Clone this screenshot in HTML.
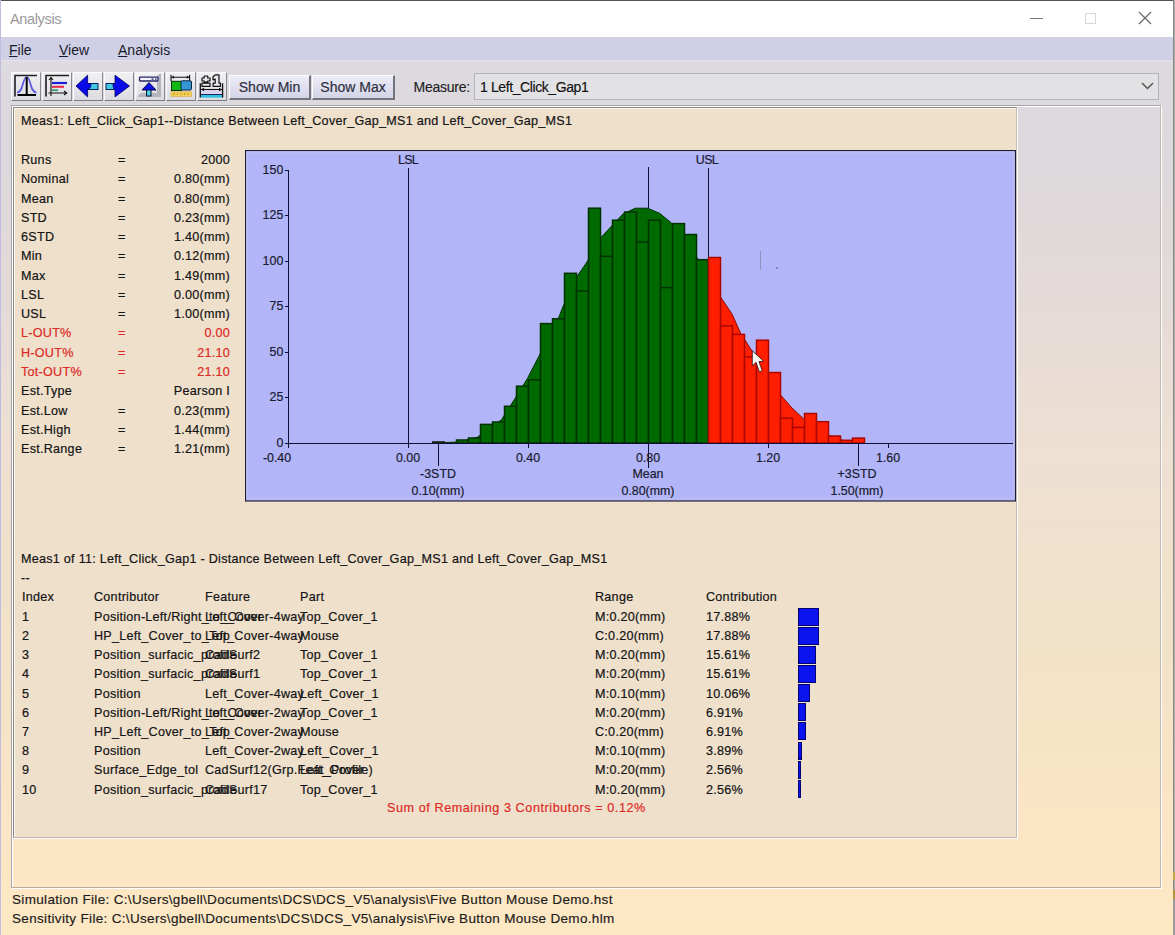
<!DOCTYPE html>
<html><head><meta charset="utf-8"><style>
*{margin:0;padding:0;box-sizing:border-box}
html,body{width:1175px;height:935px;overflow:hidden}
body{position:relative;font-family:"Liberation Sans", sans-serif;background:linear-gradient(to bottom,#dfdce2 0px,#dddae0 61px,#dcd8dc 150px,#e4dad8 300px,#eee0d2 455px,#f2e2c8 650px,#fde6c4 865px,#fde8c4 935px)}
.abs{position:absolute}
.t{position:absolute;font-size:12.6px;letter-spacing:0.26px;-webkit-text-stroke:0.2px currentColor;line-height:16px;color:#141414;white-space:pre}
.t.r{text-align:right}
.red{color:#dc2a26}
.tb{position:absolute;top:72px;width:30px;height:29px;background:linear-gradient(#f0eff2,#dcdbe0);border-top:1px solid #fbfbfd;border-left:1px solid #fbfbfd;border-right:1.5px solid #8a8a90;border-bottom:1.5px solid #7a7a80}
.btn{position:absolute;top:75px;height:25px;background:linear-gradient(#ededf8,#d6d6e8);border-top:1px solid #fdfdff;border-left:1px solid #fdfdff;border-right:2px solid #74747e;border-bottom:2px solid #74747e;font-size:14px;color:#303040;-webkit-text-stroke:0.2px #303040;text-align:center;line-height:23px;background:linear-gradient(#ececf8,#d4d4e8)}
.bar{position:absolute;background:#0a14ee;border:1px solid #000070}
</style></head><body>
<!-- window frame -->
<div class="abs" style="left:0;top:0;width:1175px;height:1px;background:#555"></div>
<div class="abs" style="left:0;top:1px;width:1173px;height:36px;background:#fff"></div>
<div class="abs" style="left:0;top:0;width:1px;height:935px;background:#c0bce0"></div>
<div class="abs" style="left:1173px;top:0;width:1px;height:935px;background:#8a8a84"></div><div class="abs" style="left:1174px;top:0;width:1px;height:935px;background:#a8aca8"></div>
<div class="abs" style="left:10px;top:11px;font-size:14.6px;letter-spacing:-0.4px;color:#9a9a9a">Analysis</div>
<!-- caption buttons -->
<div class="abs" style="left:1030px;top:18px;width:13px;height:1px;background:#777"></div>
<div class="abs" style="left:1085px;top:13px;width:11px;height:11px;border:1px solid #d8d8d8"></div>
<svg class="abs" style="left:1138px;top:11px" width="14" height="14"><path d="M1,1 L13,13 M13,1 L1,13" stroke="#666" stroke-width="1.2"/></svg>
<div class="abs" style="left:1173px;top:872px;width:2px;height:8px;background:#c0a840"></div><div class="abs" style="left:1173px;top:890px;width:2px;height:9px;background:#b09838"></div><div class="abs" style="left:1173px;top:899px;width:2px;height:36px;background:#9a9aa0"></div>
<!-- menu -->
<div class="abs" style="left:1px;top:37px;width:1172px;height:23px;background:#cfd0e6"></div>
<div class="abs" style="left:1px;top:60px;width:1172px;height:1px;background:#e6e0ee"></div>
<div class="abs" style="left:9px;top:41.5px;font-size:14px;color:#1a1a2a"><u>F</u>ile</div>
<div class="abs" style="left:59px;top:41.5px;font-size:14px;color:#1a1a2a"><u>V</u>iew</div>
<div class="abs" style="left:118px;top:41.5px;font-size:14px;color:#1a1a2a"><u>A</u>nalysis</div>
<!-- toolbar placeholder -->

<div class="tb" style="left:11px"></div>
<div class="tb" style="left:42px"></div>
<div class="tb" style="left:73px"></div>
<div class="tb" style="left:104px"></div>
<div class="tb" style="left:135px"></div>
<div class="tb" style="left:166px"></div>
<div class="tb" style="left:197px"></div>
<svg class="abs" style="left:0;top:60px" width="240" height="50" viewBox="0 60 240 50">
<!-- icon1 pressed frame -->
<path d="M15,96.5 V75.5 H37" stroke="#202020" stroke-width="1.6" fill="none"/>
<path d="M17,92.5 C20.5,92.5 21.8,88.5 23.2,83 C24.5,78.5 25.5,77 26.7,77 C27.9,77 28.9,78.5 30.2,83 C31.6,88.5 32.9,92.5 36.5,92.5" stroke="#5a5ae0" stroke-width="1.7" fill="none"/>
<path d="M26.7,77 V95 M17.5,95 H36" stroke="#000" stroke-width="2" fill="none"/>
<!-- icon2 -->
<path d="M46,96.5 V75.5 H69" stroke="#202020" stroke-width="1.6" fill="none"/>
<path d="M51,96 V78 M49,80 L51,77.5 L53,80 M48.5,93 H66.5 M64,91 L66.8,93 L64,95" stroke="#111" stroke-width="1.1" fill="none"/>
<path d="M52,83 H67" stroke="#1a20d8" stroke-width="2.2"/>
<path d="M52,86.8 H64" stroke="#e82848" stroke-width="2"/>
<path d="M52,90.2 H58" stroke="#30a070" stroke-width="1.8"/>
<!-- icon3 left arrow -->
<rect x="86" y="83.5" width="12" height="6" fill="#40c8e0" stroke="#06205a" stroke-width="1"/>
<path d="M76,86 L87.6,75.2 V83.5 H91 C91,88 89,89.5 87.6,89.5 V96.9 Z" fill="#0a0ae8" stroke="#000060" stroke-width="0.8"/>
<!-- icon4 right arrow -->
<rect x="106" y="83.5" width="12" height="6" fill="#40c8e0" stroke="#06205a" stroke-width="1"/>
<path d="M129.5,86 L115,75.2 V83.5 H113 C113,88 114,89.5 115,89.5 V96.9 Z" fill="#0a0ae8" stroke="#000060" stroke-width="0.8"/>
<!-- icon5 -->
<path d="M137,97 L141,93 H157 V76 L161,72.5 V97 Z" fill="#b4b4bc"/>
<path d="M137,97 V73 H161" stroke="#f8f8fa" stroke-width="1" fill="none"/>
<rect x="139.5" y="77.2" width="18.5" height="3.8" rx="0.8" fill="#f2f2fa" stroke="#262668" stroke-width="1.3"/>
<path d="M151.5,79.1 H153.5 M155,79.1 H156.5" stroke="#262668" stroke-width="1.3"/>
<rect x="146.5" y="89" width="4.5" height="7" fill="#50d0e8" stroke="#041030" stroke-width="1"/>
<path d="M149,82.5 L156,90 H142 Z" fill="#0a10e8" stroke="#000040" stroke-width="0.9"/>
<!-- icon6 -->
<path d="M171,77.2 H189.8 M171,74.8 V81 M189.6,74.8 V81" stroke="#111" stroke-width="1.1" fill="none"/>
<path d="M171.5,77.2 L174,75.6 V78.8 Z M189.3,77.2 L186.8,75.6 V78.8 Z" fill="#111"/>
<rect x="171.5" y="81.3" width="10" height="9.2" fill="#12b812" stroke="#0a300a" stroke-width="1"/>
<rect x="181" y="80.8" width="10.5" height="9.2" rx="1.2" fill="#3498d4" stroke="#0a2440" stroke-width="1"/>
<rect x="171" y="91.8" width="20.5" height="4.5" fill="#f4d050" stroke="#d8a838" stroke-width="0.6"/>
<path d="M174,93 V95 M177.5,93 V95 M181,93 V95 M184.5,93 V95 M188,93 V95" stroke="#9a8030" stroke-width="0.7"/>
<!-- icon7 -->
<rect x="200.5" y="90.5" width="22" height="3.8" fill="#dcd4f6"/>
<path d="M200.5,94.6 H222.5" stroke="#0a1850" stroke-width="1"/>
<rect x="200.5" y="95" width="22" height="2.6" fill="#30c0e0"/>
<path d="M200.3,83.2 V97.5 M222.6,83.2 V97.5" stroke="#111" stroke-width="1.3" fill="none"/>
<path d="M201,89.5 H222" stroke="#111" stroke-width="1.1"/>
<path d="M201,89.5 L204,87.8 V91.2 Z M222,89.5 L219,87.8 V91.2 Z" fill="#111"/>
<path d="M204.2,76 H207.7 V78 H210 V81 H207.7 V82 H204.2 V81 H202 V78 H204.2 Z M202,83.2 H210 V86.4 H202 Z M215.2,74.8 H219 V83.2 H220.5 V86.4 H213.1 V83.2 H215.2 V79.2 L213,79.8 V77 Z" fill="#e8e8ec" stroke="#111" stroke-width="1.2" stroke-linejoin="round"/>
</svg>
<div class="btn" style="left:229px;width:82px">Show Min</div>
<div class="btn" style="left:312px;width:83px">Show Max</div>

<!-- combobox -->
<div class="abs" style="left:413.5px;top:79px;font-size:14px;letter-spacing:-0.25px;color:#222;-webkit-text-stroke:0.15px #222">Measure:</div>
<div class="abs" style="left:474px;top:73px;width:685px;height:27px;border:1px solid #b4b4b4;background:#e2e2e4"></div>
<div class="abs" style="left:480px;top:79px;font-size:14px;letter-spacing:-0.4px;color:#111;-webkit-text-stroke:0.15px #111">1 Left_Click_Gap1</div>
<svg class="abs" style="left:1141px;top:82px" width="13" height="8"><path d="M1,1 L6.5,6.5 L12,1" stroke="#555" stroke-width="1.5" fill="none"/></svg>
<!-- outer frame -->
<div class="abs" style="left:11px;top:105px;width:1150px;height:783px;border-top:1px solid #a8a6aa;border-left:1px solid #a8a6aa;border-right:1px solid #c0b8b0;border-bottom:1px solid #b8aaa0;box-shadow:inset 1px 1px 0 #fff, 1px 1px 0 #fff"></div>
<!-- inner panel -->
<div class="abs" style="left:13px;top:107px;width:1004px;height:731px;background:#efe0cc;border-top:1px solid #8c8a88;border-left:1px solid #8c8a88;border-right:1px solid #c4b8b0;border-bottom:1px solid #c0b0a8;box-shadow:inset 1px 1px 0 #fbf6ee, 1px 1px 0 #fff"></div>
<div class="t" style="left:21px;top:113px">Meas1: Left_Click_Gap1--Distance Between Left_Cover_Gap_MS1 and Left_Cover_Gap_MS1</div>
<div class="t" style="left:21px;top:152.0px">Runs</div>
<div class="t" style="left:118px;top:152.0px">=</div>
<div class="t r" style="right:945px;top:152.0px">2000</div>
<div class="t" style="left:21px;top:171.3px">Nominal</div>
<div class="t" style="left:118px;top:171.3px">=</div>
<div class="t r" style="right:945px;top:171.3px">0.80(mm)</div>
<div class="t" style="left:21px;top:190.5px">Mean</div>
<div class="t" style="left:118px;top:190.5px">=</div>
<div class="t r" style="right:945px;top:190.5px">0.80(mm)</div>
<div class="t" style="left:21px;top:209.8px">STD</div>
<div class="t" style="left:118px;top:209.8px">=</div>
<div class="t r" style="right:945px;top:209.8px">0.23(mm)</div>
<div class="t" style="left:21px;top:229.1px">6STD</div>
<div class="t" style="left:118px;top:229.1px">=</div>
<div class="t r" style="right:945px;top:229.1px">1.40(mm)</div>
<div class="t" style="left:21px;top:248.3px">Min</div>
<div class="t" style="left:118px;top:248.3px">=</div>
<div class="t r" style="right:945px;top:248.3px">0.12(mm)</div>
<div class="t" style="left:21px;top:267.6px">Max</div>
<div class="t" style="left:118px;top:267.6px">=</div>
<div class="t r" style="right:945px;top:267.6px">1.49(mm)</div>
<div class="t" style="left:21px;top:286.9px">LSL</div>
<div class="t" style="left:118px;top:286.9px">=</div>
<div class="t r" style="right:945px;top:286.9px">0.00(mm)</div>
<div class="t" style="left:21px;top:306.2px">USL</div>
<div class="t" style="left:118px;top:306.2px">=</div>
<div class="t r" style="right:945px;top:306.2px">1.00(mm)</div>
<div class="t red" style="left:21px;top:325.4px">L-OUT%</div>
<div class="t red" style="left:118px;top:325.4px">=</div>
<div class="t red r" style="right:945px;top:325.4px">0.00</div>
<div class="t red" style="left:21px;top:344.7px">H-OUT%</div>
<div class="t red" style="left:118px;top:344.7px">=</div>
<div class="t red r" style="right:945px;top:344.7px">21.10</div>
<div class="t red" style="left:21px;top:364.0px">Tot-OUT%</div>
<div class="t red" style="left:118px;top:364.0px">=</div>
<div class="t red r" style="right:945px;top:364.0px">21.10</div>
<div class="t" style="left:21px;top:383.2px">Est.Type</div>
<div class="t r" style="right:945px;top:383.2px">Pearson I</div>
<div class="t" style="left:21px;top:402.5px">Est.Low</div>
<div class="t" style="left:118px;top:402.5px">=</div>
<div class="t r" style="right:945px;top:402.5px">0.23(mm)</div>
<div class="t" style="left:21px;top:421.8px">Est.High</div>
<div class="t" style="left:118px;top:421.8px">=</div>
<div class="t r" style="right:945px;top:421.8px">1.44(mm)</div>
<div class="t" style="left:21px;top:441.1px">Est.Range</div>
<div class="t" style="left:118px;top:441.1px">=</div>
<div class="t r" style="right:945px;top:441.1px">1.21(mm)</div>
<!-- chart -->
<svg class="abs" style="left:245px;top:150px" width="771" height="352" viewBox="245 150 771 352" font-family='"Liberation Sans", sans-serif' font-size="12.4">
<rect x="245" y="149" width="772" height="354" fill="#fff4f0"/>
<rect x="245.5" y="150.5" width="770" height="350.5" fill="#b2b6f8" stroke="#1e1a30" stroke-width="1.2"/>
<path d="M247,500 V152 H1014 M247,499 H1014 V152" stroke="#c4c0f0" stroke-width="1" fill="none"/>
<g transform="translate(-1,0)">
<path d="M409.5,168 V443 M709.5,168 V443 M649.5,167 V443" stroke="#101038" stroke-width="1"/>
<polygon points="433.0,443.0 433.0,443.0 460.0,442.0 478.5,437.2 502.6,419.6 515.4,399.5 528.3,378.7 539.5,357.0 559.6,317.7 564.4,305.6 577.0,278.0 588.0,262.0 601.0,238.6 612.4,226.3 624.0,214.0 636.3,208.2 648.5,208.2 660.8,213.4 672.3,222.9 697.5,257.0 709.0,275.0 709.0,275.0 709.0,443.0" fill="#006a00" stroke="#003000" stroke-width="1"/>
<polygon points="709.0,443.0 709.0,275.0 720.9,296.0 733.0,314.0 741.7,333.4 751.0,348.0 781.0,394.3 793.0,408.0 804.7,418.9 817.0,427.4 829.0,435.0 841.0,439.8 852.8,442.0 865.0,443.0 865.0,443.0" fill="#ff1e00" stroke="#900800" stroke-width="1"/>
<path d="M433,442 H446" stroke="#102010" stroke-width="1.6"/>
<rect x="457.5" y="440.0" width="12" height="3.0" fill="#006a00" stroke="#003200" stroke-width="1.5"/>
<rect x="469.5" y="438.0" width="12" height="5.0" fill="#006a00" stroke="#003200" stroke-width="1.5"/>
<rect x="481.5" y="424.4" width="12" height="18.6" fill="#006a00" stroke="#003200" stroke-width="1.5"/>
<rect x="493.5" y="422.0" width="12" height="21.0" fill="#006a00" stroke="#003200" stroke-width="1.5"/>
<rect x="505.5" y="406.3" width="12" height="36.7" fill="#006a00" stroke="#003200" stroke-width="1.5"/>
<rect x="517.5" y="386.2" width="12" height="56.8" fill="#006a00" stroke="#003200" stroke-width="1.5"/>
<rect x="529.5" y="379.8" width="12" height="63.2" fill="#006a00" stroke="#003200" stroke-width="1.5"/>
<rect x="541.5" y="323.6" width="12" height="119.4" fill="#006a00" stroke="#003200" stroke-width="1.5"/>
<rect x="553.5" y="318.8" width="12" height="124.2" fill="#006a00" stroke="#003200" stroke-width="1.5"/>
<rect x="565.5" y="273.3" width="12" height="169.7" fill="#006a00" stroke="#003200" stroke-width="1.5"/>
<rect x="577.5" y="291.0" width="12" height="152.0" fill="#006a00" stroke="#003200" stroke-width="1.5"/>
<rect x="589.5" y="208.2" width="12" height="234.8" fill="#006a00" stroke="#003200" stroke-width="1.5"/>
<rect x="601.5" y="256.3" width="12" height="186.7" fill="#006a00" stroke="#003200" stroke-width="1.5"/>
<rect x="613.5" y="220.2" width="12" height="222.8" fill="#006a00" stroke="#003200" stroke-width="1.5"/>
<rect x="625.5" y="212.0" width="12" height="231.0" fill="#006a00" stroke="#003200" stroke-width="1.5"/>
<rect x="637.5" y="242.0" width="12" height="201.0" fill="#006a00" stroke="#003200" stroke-width="1.5"/>
<rect x="649.5" y="220.2" width="12" height="222.8" fill="#006a00" stroke="#003200" stroke-width="1.5"/>
<rect x="661.5" y="287.6" width="12" height="155.4" fill="#006a00" stroke="#003200" stroke-width="1.5"/>
<rect x="673.5" y="223.6" width="12" height="219.4" fill="#006a00" stroke="#003200" stroke-width="1.5"/>
<rect x="685.5" y="234.5" width="12" height="208.5" fill="#006a00" stroke="#003200" stroke-width="1.5"/>
<rect x="697.5" y="259.7" width="12" height="183.3" fill="#006a00" stroke="#003200" stroke-width="1.5"/>
<rect x="709.5" y="257.5" width="12" height="185.5" fill="#ff1e00" stroke="#a80800" stroke-width="1.5"/>
<rect x="721.5" y="325.9" width="12" height="117.1" fill="#ff1e00" stroke="#a80800" stroke-width="1.5"/>
<rect x="733.5" y="334.4" width="12" height="108.6" fill="#ff1e00" stroke="#a80800" stroke-width="1.5"/>
<rect x="745.5" y="356.9" width="12" height="86.1" fill="#ff1e00" stroke="#a80800" stroke-width="1.5"/>
<rect x="757.5" y="340.2" width="12" height="102.8" fill="#ff1e00" stroke="#a80800" stroke-width="1.5"/>
<rect x="769.5" y="372.5" width="12" height="70.5" fill="#ff1e00" stroke="#a80800" stroke-width="1.5"/>
<rect x="781.5" y="418.2" width="12" height="24.8" fill="#ff1e00" stroke="#a80800" stroke-width="1.5"/>
<rect x="793.5" y="427.4" width="12" height="15.6" fill="#ff1e00" stroke="#a80800" stroke-width="1.5"/>
<rect x="805.5" y="413.5" width="12" height="29.5" fill="#ff1e00" stroke="#a80800" stroke-width="1.5"/>
<rect x="817.5" y="421.7" width="12" height="21.3" fill="#ff1e00" stroke="#a80800" stroke-width="1.5"/>
<rect x="829.5" y="436.0" width="12" height="7.0" fill="#ff1e00" stroke="#a80800" stroke-width="1.5"/>
<rect x="841.5" y="440.3" width="12" height="2.7" fill="#ff1e00" stroke="#a80800" stroke-width="1.5"/>
<rect x="853.5" y="438.1" width="12" height="4.9" fill="#ff1e00" stroke="#a80800" stroke-width="1.5"/>
<g stroke="#101038" stroke-width="1" fill="none">
<path d="M289.5,170 V443.5 H1014"/>
<path d="M286,170.5 H289 M286,215.5 H289 M286,261.5 H289 M286,306.5 H289 M286,352.5 H289 M286,397.5 H289 M286,443.5 H289"/>
<path d="M289.5,443 V448 M409.5,443 V448 M529.5,443 V448 M769.5,443 V448 M889.5,443 V448"/>
<path d="M439.5,443 V466 M859.5,443 V466 M649.5,443 V468"/>
</g>
<g fill="#1a1a30" stroke="#1a1a30" stroke-width="0.2">
<text x="284.3" y="174" text-anchor="end">150</text>
<text x="284.3" y="219.3" text-anchor="end">125</text>
<text x="284.3" y="265" text-anchor="end">100</text>
<text x="284.3" y="310.3" text-anchor="end">75</text>
<text x="284.3" y="356" text-anchor="end">50</text>
<text x="284.3" y="401.3" text-anchor="end">25</text>
<text x="284.3" y="447.3" text-anchor="end">0</text>
<text x="409" y="164" text-anchor="middle" letter-spacing="-0.6">LSL</text>
<text x="708" y="164" text-anchor="middle" letter-spacing="-0.6">USL</text>
<text x="278" y="462" text-anchor="middle">-0.40</text>
<text x="409" y="462" text-anchor="middle">0.00</text>
<text x="529" y="462" text-anchor="middle">0.40</text>
<text x="649" y="462" text-anchor="middle">0.80</text>
<text x="769" y="462" text-anchor="middle">1.20</text>
<text x="889" y="462" text-anchor="middle">1.60</text>
<text x="439" y="478" text-anchor="middle">-3STD</text>
<text x="439" y="495" text-anchor="middle">0.10(mm)</text>
<text x="649" y="478" text-anchor="middle">Mean</text>
<text x="649" y="495" text-anchor="middle">0.80(mm)</text>
<text x="858" y="478" text-anchor="middle">+3STD</text>
<text x="858" y="495" text-anchor="middle">1.50(mm)</text>
</g>
<path d="M753.3,350.7 V366 L757,362.3 L760.3,371.8 L763.2,370.8 L760,361.6 L764.6,361.3 Z" fill="#f4f4f0" stroke="#301010" stroke-width="0.8"/>
<path d="M761.5,251 V270" stroke="#8888b0" stroke-width="0.8"/><rect x="777.5" y="267.5" width="1.2" height="1.2" fill="#303050"/>
</g>
</svg>
<div class="t " style="left:21px;top:550.8px">Meas1 of 11: Left_Click_Gap1 - Distance Between Left_Cover_Gap_MS1 and Left_Cover_Gap_MS1</div>
<div class="t " style="left:21px;top:569.8px">--</div>
<div class="t " style="left:22px;top:588.8px">Index</div>
<div class="t " style="left:94px;top:588.8px">Contributor</div>
<div class="t " style="left:205px;top:588.8px">Feature</div>
<div class="t " style="left:300px;top:588.8px">Part</div>
<div class="t " style="left:595px;top:588.8px">Range</div>
<div class="t " style="left:706px;top:588.8px">Contribution</div>
<div class="t " style="left:22px;top:608.8px">1</div>
<div class="t " style="left:94px;top:608.8px">Position-Left/Right_to_Cover</div>
<div class="t " style="left:205px;top:608.8px">Left_Cover-4way</div>
<div class="t " style="left:300px;top:608.8px">Top_Cover_1</div>
<div class="t " style="left:595px;top:608.8px">M:0.20(mm)</div>
<div class="t " style="left:706px;top:608.8px">17.88%</div>
<div class="bar" style="left:798px;top:607.5px;width:21px;height:18px"></div>
<div class="t " style="left:22px;top:628.0px">2</div>
<div class="t " style="left:94px;top:628.0px">HP_Left_Cover_to_Top</div>
<div class="t " style="left:205px;top:628.0px">Left_Cover-4way</div>
<div class="t " style="left:300px;top:628.0px">Mouse</div>
<div class="t " style="left:595px;top:628.0px">C:0.20(mm)</div>
<div class="t " style="left:706px;top:628.0px">17.88%</div>
<div class="bar" style="left:798px;top:626.6px;width:21px;height:18px"></div>
<div class="t " style="left:22px;top:647.2px">3</div>
<div class="t " style="left:94px;top:647.2px">Position_surfacic_profile</div>
<div class="t " style="left:205px;top:647.2px">CadSurf2</div>
<div class="t " style="left:300px;top:647.2px">Top_Cover_1</div>
<div class="t " style="left:595px;top:647.2px">M:0.20(mm)</div>
<div class="t " style="left:706px;top:647.2px">15.61%</div>
<div class="bar" style="left:798px;top:645.8px;width:18px;height:18px"></div>
<div class="t " style="left:22px;top:666.4px">4</div>
<div class="t " style="left:94px;top:666.4px">Position_surfacic_profile</div>
<div class="t " style="left:205px;top:666.4px">CadSurf1</div>
<div class="t " style="left:300px;top:666.4px">Top_Cover_1</div>
<div class="t " style="left:595px;top:666.4px">M:0.20(mm)</div>
<div class="t " style="left:706px;top:666.4px">15.61%</div>
<div class="bar" style="left:798px;top:665.0px;width:18px;height:18px"></div>
<div class="t " style="left:22px;top:685.6px">5</div>
<div class="t " style="left:94px;top:685.6px">Position</div>
<div class="t " style="left:205px;top:685.6px">Left_Cover-4way</div>
<div class="t " style="left:300px;top:685.6px">Left_Cover_1</div>
<div class="t " style="left:595px;top:685.6px">M:0.10(mm)</div>
<div class="t " style="left:706px;top:685.6px">10.06%</div>
<div class="bar" style="left:798px;top:684.1px;width:12px;height:18px"></div>
<div class="t " style="left:22px;top:704.8px">6</div>
<div class="t " style="left:94px;top:704.8px">Position-Left/Right_to_Cover</div>
<div class="t " style="left:205px;top:704.8px">Left_Cover-2way</div>
<div class="t " style="left:300px;top:704.8px">Top_Cover_1</div>
<div class="t " style="left:595px;top:704.8px">M:0.20(mm)</div>
<div class="t " style="left:706px;top:704.8px">6.91%</div>
<div class="bar" style="left:798px;top:703.2px;width:8px;height:18px"></div>
<div class="t " style="left:22px;top:724.0px">7</div>
<div class="t " style="left:94px;top:724.0px">HP_Left_Cover_to_Top</div>
<div class="t " style="left:205px;top:724.0px">Left_Cover-2way</div>
<div class="t " style="left:300px;top:724.0px">Mouse</div>
<div class="t " style="left:595px;top:724.0px">C:0.20(mm)</div>
<div class="t " style="left:706px;top:724.0px">6.91%</div>
<div class="bar" style="left:798px;top:722.4px;width:8px;height:18px"></div>
<div class="t " style="left:22px;top:743.2px">8</div>
<div class="t " style="left:94px;top:743.2px">Position</div>
<div class="t " style="left:205px;top:743.2px">Left_Cover-2way</div>
<div class="t " style="left:300px;top:743.2px">Left_Cover_1</div>
<div class="t " style="left:595px;top:743.2px">M:0.10(mm)</div>
<div class="t " style="left:706px;top:743.2px">3.89%</div>
<div class="bar" style="left:798px;top:741.5px;width:4px;height:18px"></div>
<div class="t " style="left:22px;top:762.4px">9</div>
<div class="t " style="left:94px;top:762.4px">Surface_Edge_tol</div>
<div class="t " style="left:205px;top:762.4px">CadSurf12(Grp.Feat_Profile)</div>
<div class="t " style="left:300px;top:762.4px">Left_Cover</div>
<div class="t " style="left:595px;top:762.4px">M:0.20(mm)</div>
<div class="t " style="left:706px;top:762.4px">2.56%</div>
<div class="bar" style="left:798px;top:760.7px;width:3px;height:18px"></div>
<div class="t " style="left:22px;top:781.6px">10</div>
<div class="t " style="left:94px;top:781.6px">Position_surfacic_profile</div>
<div class="t " style="left:205px;top:781.6px">CadSurf17</div>
<div class="t " style="left:300px;top:781.6px">Top_Cover_1</div>
<div class="t " style="left:595px;top:781.6px">M:0.20(mm)</div>
<div class="t " style="left:706px;top:781.6px">2.56%</div>
<div class="bar" style="left:798px;top:779.9px;width:3px;height:18px"></div>
<div class="t red" style="left:387px;top:800px;letter-spacing:0.58px">Sum of Remaining 3 Contributors = 0.12%</div>
<!-- footer -->
<div class="abs" style="left:12px;top:892px;font-size:13.5px;letter-spacing:0.33px;color:#1a1a1a;white-space:pre;-webkit-text-stroke:0.15px #1a1a1a">Simulation File: C:\Users\gbell\Documents\DCS\DCS_V5\analysis\Five Button Mouse Demo.hst</div>
<div class="abs" style="left:12px;top:911px;font-size:13.5px;letter-spacing:0.33px;color:#1a1a1a;white-space:pre;-webkit-text-stroke:0.15px #1a1a1a">Sensitivity File: C:\Users\gbell\Documents\DCS\DCS_V5\analysis\Five Button Mouse Demo.hlm</div>
</body></html>
